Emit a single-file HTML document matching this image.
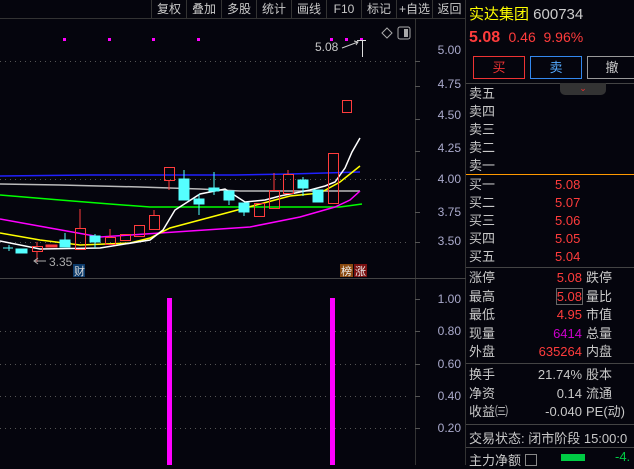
<!DOCTYPE html><html><head><meta charset="utf-8"><style>
body{margin:0;background:#05050d;width:634px;height:465px;overflow:hidden;font-family:"Liberation Sans","Noto Sans CJK SC",sans-serif;position:relative}
.a{position:absolute;white-space:nowrap}
.tb{position:absolute;top:0;height:18px;font-size:12px;color:#c8c8c8;line-height:18px;text-align:center;border-left:1px solid #333}
.l{color:#c8c8c8;font-size:13px}
.r{color:#ff3c3c;font-size:13px}
</style></head><body>
<div class="tb" style="left:151px;width:34px">复权</div>
<div class="tb" style="left:186px;width:34px">叠加</div>
<div class="tb" style="left:221px;width:34px">多股</div>
<div class="tb" style="left:256px;width:34px">统计</div>
<div class="tb" style="left:291px;width:34px">画线</div>
<div class="tb" style="left:326px;width:34px">F10</div>
<div class="tb" style="left:361px;width:34px">标记</div>
<div class="tb" style="left:396px;width:35px">+自选</div>
<div class="tb" style="left:432px;width:33px">返回</div>
<svg class="a" style="left:0;top:0" width="466" height="465">
<line x1="0" y1="18.5" x2="466" y2="18.5" stroke="#333"/>
<line x1="415.5" y1="18" x2="415.5" y2="465" stroke="#333"/>
<line x1="465.5" y1="0" x2="465.5" y2="465" stroke="#333"/>
<line x1="0" y1="278.5" x2="466" y2="278.5" stroke="#444"/>
<g stroke="#555" stroke-dasharray="1,4">
<line x1="0" y1="61.5" x2="410" y2="61.5"/><line x1="0" y1="179.5" x2="410" y2="179.5"/><line x1="0" y1="242.5" x2="410" y2="242.5"/>
<line x1="0" y1="331.5" x2="410" y2="331.5"/><line x1="0" y1="364.5" x2="410" y2="364.5"/><line x1="0" y1="396.5" x2="410" y2="396.5"/><line x1="0" y1="428.5" x2="410" y2="428.5"/></g>
<g stroke="#555"><line x1="415" y1="61.5" x2="420" y2="61.5"/><line x1="415" y1="86.5" x2="420" y2="86.5"/><line x1="415" y1="119.5" x2="420" y2="119.5"/><line x1="415" y1="151.5" x2="420" y2="151.5"/><line x1="415" y1="179.5" x2="420" y2="179.5"/><line x1="415" y1="212.5" x2="420" y2="212.5"/><line x1="415" y1="242.5" x2="420" y2="242.5"/>
<line x1="415" y1="299.5" x2="420" y2="299.5"/><line x1="415" y1="331.5" x2="420" y2="331.5"/><line x1="415" y1="364.5" x2="420" y2="364.5"/><line x1="415" y1="396.5" x2="420" y2="396.5"/><line x1="415" y1="428.5" x2="420" y2="428.5"/></g>
<g fill="#f0f"><rect x="63" y="38" width="3" height="3"/><rect x="108" y="38" width="3" height="3"/><rect x="152" y="38" width="3" height="3"/><rect x="197" y="38" width="3" height="3"/><rect x="330" y="38" width="3" height="3"/><rect x="345" y="38" width="3" height="3"/><rect x="360" y="38" width="3" height="3"/></g>
<rect x="398" y="27" width="12" height="12" rx="2" fill="none" stroke="#aaa"/><rect x="404" y="29" width="4" height="8" fill="#aaa"/>
<path d="M387 28 l5 5 -5 5 -5 -5z" fill="none" stroke="#aaa"/>
<text x="315" y="51" fill="#c8c8c8" font-size="12">5.08</text>
<path d="M342 48 L358 42 M354 41 l4 1 -2 3" stroke="#ccc" fill="none"/>
<line x1="362.5" y1="40" x2="362.5" y2="57" stroke="#ddd"/><line x1="357" y1="40.5" x2="366" y2="40.5" stroke="#ddd"/>
<polyline fill="none" stroke="#2020ff" stroke-width="1.5" points="0,176 90,175 235,175 290,174 360,172"/>
<polyline fill="none" stroke="#bbb" stroke-width="1.5" points="0,184 60,185 140,187 200,189 240,191 360,191"/>
<polyline fill="none" stroke="#0f0" stroke-width="1.5" points="0,195 60,200 110,204 150,207 200,207 340,207 362,204"/>
<polyline fill="none" stroke="#f0f" stroke-width="1.5" points="0,219 50,228 100,237 160,233 250,227 300,217 335,207 350,200 360,191"/>
<polyline fill="none" stroke="#ff0" stroke-width="1.5" points="0,233 40,240 80,245 130,243 150,238 170,228 230,212 260,204 290,196 320,193 340,182 360,166"/>
<polyline fill="none" stroke="#fff" stroke-width="1.5" points="0,241 40,249 100,248 150,240 163,230 175,210 200,194 225,189 245,202 265,200 280,196 310,190 325,186 335,182 345,168 352,152 360,138"/>
<g fill="#5ff" stroke="#5ff">
<line x1="9" y1="245" x2="9" y2="251"/><line x1="3" y1="248" x2="13" y2="248"/>
<rect x="16" y="249" width="11" height="4"/>
<rect x="60" y="240" width="10" height="7"/><line x1="65" y1="233" x2="65" y2="240"/>
<rect x="90" y="236" width="10" height="6"/><line x1="95" y1="234" x2="95" y2="248"/>
<rect x="179" y="179" width="10" height="21"/><line x1="184" y1="170" x2="184" y2="179"/>
<rect x="194" y="199" width="10" height="5"/><line x1="199" y1="194" x2="199" y2="215"/>
<rect x="209" y="188" width="10" height="3"/><line x1="214" y1="172" x2="214" y2="195"/>
<rect x="224" y="191" width="10" height="9"/><line x1="229" y1="200" x2="229" y2="205"/>
<rect x="239" y="203" width="10" height="9"/><line x1="244" y1="212" x2="244" y2="216"/>
<rect x="298" y="180" width="10" height="8"/><line x1="303" y1="177" x2="303" y2="196"/>
<rect x="313" y="190" width="10" height="12"/></g>
<g fill="none" stroke="#ff3c3c">
<rect x="32.5" y="246.5" width="10" height="5"/><line x1="37" y1="242" x2="37" y2="246"/><line x1="37" y1="252" x2="37" y2="262"/>
<rect x="46" y="245" width="11" height="2" fill="#ff3c3c"/>
<rect x="75.5" y="228.5" width="10" height="21"/><line x1="80" y1="209" x2="80" y2="228"/>
<rect x="105.5" y="237.5" width="10" height="7"/><line x1="110" y1="229" x2="110" y2="237"/>
<rect x="120.5" y="234.5" width="10" height="6"/>
<rect x="134.5" y="225.5" width="10" height="11"/>
<rect x="149.5" y="215.5" width="10" height="14"/><line x1="154" y1="210" x2="154" y2="215"/>
<rect x="164.5" y="167.5" width="10" height="13"/><line x1="169" y1="181" x2="169" y2="190"/>
<rect x="254.5" y="203.5" width="10" height="13"/>
<rect x="269.5" y="190.5" width="10" height="18"/><line x1="274" y1="173" x2="274" y2="190"/>
<rect x="283.5" y="174.5" width="10" height="19"/><line x1="288" y1="170" x2="288" y2="174"/>
<rect x="328.5" y="153.5" width="10" height="50"/>
<rect x="342.5" y="100.5" width="9" height="12"/></g>
<path d="M34 261 H46 M38 258 l-4 3 4 3" stroke="#aaa" fill="none"/>
<text x="49" y="266" fill="#aaa" font-size="12">3.35</text>
<rect x="73" y="264" width="12" height="13" fill="#0b3a6a"/><text x="74" y="275" fill="#ddd" font-size="11">财</text>
<rect x="340" y="264" width="13" height="13" fill="#8a4a10"/><text x="341" y="275" fill="#eee" font-size="11">榜</text>
<rect x="354" y="264" width="13" height="13" fill="#7a1010"/><text x="355" y="275" fill="#eee" font-size="11">涨</text>
<rect x="167" y="298" width="5" height="167" fill="#f0f"/><rect x="330" y="298" width="5" height="167" fill="#f0f"/>
<g fill="#aac" font-size="12" text-anchor="end"><text x="461" y="54">5.00</text><text x="461" y="88">4.75</text><text x="461" y="119">4.50</text><text x="461" y="152">4.25</text><text x="461" y="183">4.00</text><text x="461" y="216">3.75</text><text x="461" y="245">3.50</text>
<text x="461" y="303">1.00</text><text x="461" y="335">0.80</text><text x="461" y="368">0.60</text><text x="461" y="400">0.40</text><text x="461" y="432">0.20</text></g>
</svg>
<div class="a" style="left:469px;top:3px;font-size:15px;color:#ff0">实达集团 <span style="color:#ccc">600734</span></div>
<div class="a" style="left:469px;top:29px;font-size:16px;color:#ff3c3c"><b>5.08</b> <span style="font-size:14px">&nbsp;0.46 &nbsp;9.96%</span></div>
<div class="a" style="left:473px;top:56px;width:50px;height:21px;border:1px solid #e33;color:#e33;text-align:center;line-height:21px;font-size:13px">买</div>
<div class="a" style="left:530px;top:56px;width:50px;height:21px;border:1px solid #38e;color:#5af;text-align:center;line-height:21px;font-size:13px">卖</div>
<div class="a" style="left:587px;top:56px;width:48px;height:21px;border:1px solid #999;color:#ccc;text-align:center;line-height:21px;font-size:13px">撤</div>
<div class="a" style="left:466px;top:83px;width:168px;border-top:1px solid #444"></div>
<div class="a" style="left:560px;top:83px;width:46px;height:12px;background:#333;border-radius:0 0 5px 5px;color:#e33;font-size:9px;text-align:center">⌄</div>
<div class="a l" style="left:469px;top:85px;line-height:18px">卖五<br>卖四<br>卖三<br>卖二<br>卖一</div>
<div class="a" style="left:466px;top:174px;width:168px;border-top:1px solid #f90"></div>
<div class="a l" style="left:469px;top:176px;line-height:18px">买一<br>买二<br>买三<br>买四<br>买五</div>
<div class="a r" style="left:555px;top:176px;line-height:18px">5.08<br>5.07<br>5.06<br>5.05<br>5.04</div>
<div class="a" style="left:466px;top:267px;width:168px;border-top:1px solid #444"></div>
<div class="a l" style="left:469px;top:269px;line-height:18.5px">涨停<br>最高<br>最低<br>现量<br>外盘</div>
<div class="a r" style="left:500px;top:269px;width:82px;text-align:right;line-height:18.5px">5.08<br><span style="outline:1px solid #666">5.08</span><br>4.95<br><span style="color:#c0c">6414</span><br>635264</div>
<div class="a l" style="left:586px;top:269px;line-height:18.5px">跌停<br>量比<br>市值<br>总量<br>内盘</div>
<div class="a" style="left:466px;top:363px;width:168px;border-top:1px solid #444"></div>
<div class="a l" style="left:469px;top:366px;line-height:18.5px">换手<br>净资<br>收益㈢</div>
<div class="a l" style="left:500px;top:366px;width:82px;text-align:right;line-height:18.5px">21.74%<br>0.14<br>-0.040</div>
<div class="a l" style="left:586px;top:366px;line-height:18.5px">股本<br>流通<br>PE(动)</div>
<div class="a" style="left:466px;top:424px;width:168px;border-top:1px solid #444"></div>
<div class="a l" style="left:469px;top:428px">交易状态: 闭市阶段 15:00:0</div>
<div class="a" style="left:466px;top:447px;width:168px;border-top:1px solid #444"></div>
<div class="a l" style="left:469px;top:450px">主力净额 <span style="display:inline-block;width:10px;height:10px;border:1px solid #888;vertical-align:-1px"></span></div>
<div class="a" style="left:561px;top:454px;width:24px;height:7px;background:#0c4"></div>
<div class="a" style="left:615px;top:449px;color:#0c4;font-size:13px">-4.</div>
</body></html>
